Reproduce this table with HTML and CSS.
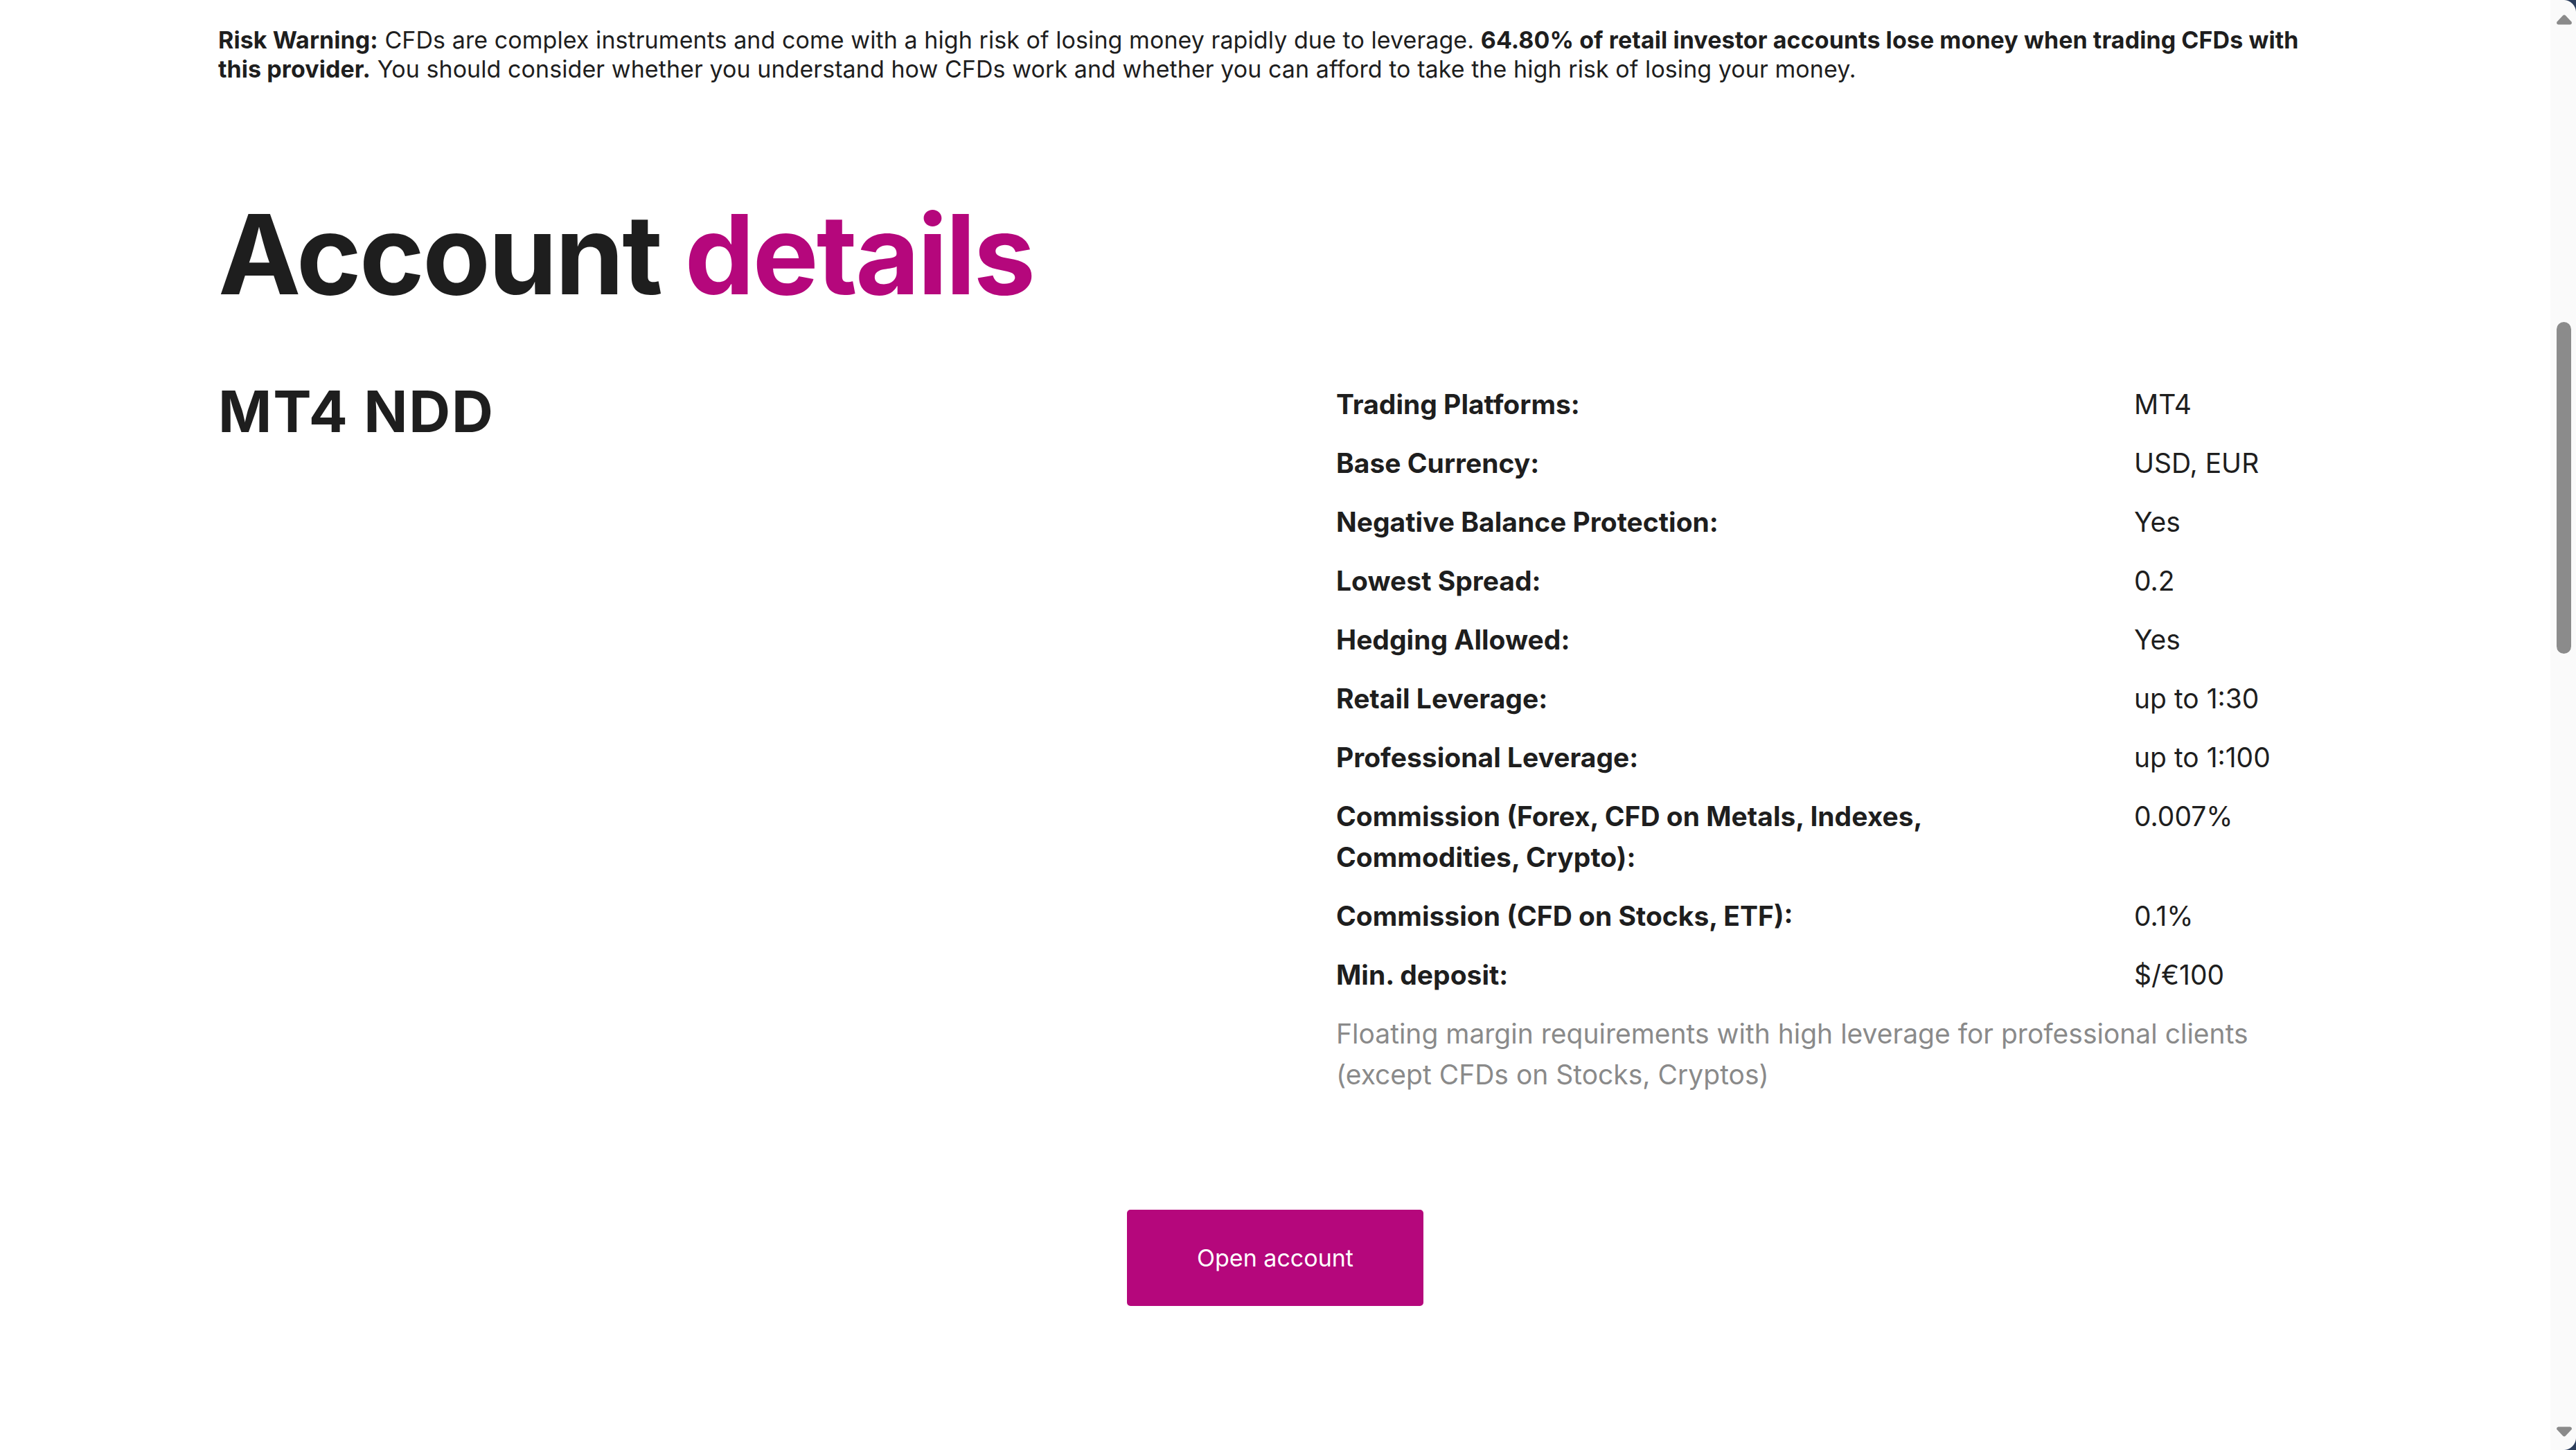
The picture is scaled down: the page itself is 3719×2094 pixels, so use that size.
FILE: index.html
```html
<!DOCTYPE html>
<html lang="en">
<head>
<meta charset="utf-8">
<title>Account details</title>
<link rel="stylesheet" href="styles.css">
</head>
<body>
<div class="screen">
  <main class="page">
    <div class="container">
      <p class="risk"><strong>Risk Warning:</strong> CFDs are complex instruments and come with a high risk of losing money rapidly due to leverage. <strong>64.80% of retail investor accounts lose money when trading CFDs with this provider.</strong> You should consider whether you understand how CFDs work and whether you can afford to take the high risk of losing your money.</p>

      <h1 class="title">Account <span class="accent">details</span></h1>

      <section class="details">
        <h2 class="acct-name">MT4 NDD</h2>
        <div class="specs">
          <div class="label">Trading Platforms:</div><div class="value">MT4</div>
          <div class="label">Base Currency:</div><div class="value">USD, EUR</div>
          <div class="label">Negative Balance Protection:</div><div class="value">Yes</div>
          <div class="label">Lowest Spread:</div><div class="value">0.2</div>
          <div class="label">Hedging Allowed:</div><div class="value">Yes</div>
          <div class="label">Retail Leverage:</div><div class="value">up to 1:30</div>
          <div class="label">Professional Leverage:</div><div class="value">up to 1:100</div>
          <div class="label">Commission (Forex, CFD on Metals, Indexes, Commodities, Crypto):</div><div class="value">0.007%</div>
          <div class="label">Commission (CFD on Stocks, ETF):</div><div class="value">0.1%</div>
          <div class="label">Min. deposit:</div><div class="value">$/€100</div>
          <div class="note">Floating margin requirements with high leverage for professional clients (except CFDs on Stocks, Cryptos)</div>
        </div>
      </section>

      <div class="actions">
        <a class="btn" href="#">Open account</a>
      </div>
    </div>
  </main>

  <aside class="scrollbar">
    <svg class="arrow" width="24" height="17" viewBox="0 0 24 17"><path d="M10 2.5 Q12 0.5 14 2.5 L22.5 11.5 Q24 14.5 20.5 15.5 L3.5 15.5 Q0 14.5 1.5 11.5 Z" fill="#8a8a8a"/></svg>
    <div class="track"><div class="thumb"></div></div>
    <svg class="arrow" width="24" height="17" viewBox="0 0 24 17"><path d="M10 14.5 Q12 16.5 14 14.5 L22.5 5.5 Q24 2.5 20.5 1.5 L3.5 1.5 Q0 2.5 1.5 5.5 Z" fill="#8a8a8a"/></svg>
  </aside>

  <div class="corner corner-tr"></div>
  <div class="corner corner-br"></div>
</div>
</body>
</html>
```

FILE: styles.css
```css
html, body {
  margin: 0;
  padding: 0;
  height: 100%;
  overflow: hidden;
  background: #ffffff;
}

body {
  font-family: "Inter", "Liberation Sans", sans-serif;
  color: #1e1e1e;
}

.screen {
  position: relative;
  display: flex;
  height: 2094px;
}

.page {
  flex: 1;
  min-width: 0;
}

.container {
  width: 3052px;
  margin: 0 auto;
  padding-top: 37px;
}

.risk {
  margin: 0;
  font-size: 34px;
  line-height: 42px;
  letter-spacing: 0.002em;
}

.risk strong {
  font-weight: 700;
}

.title {
  margin: 166px 0 0;
  font-size: 160px;
  line-height: 160px;
  font-weight: 700;
  letter-spacing: -0.019em;
  color: #1e1e1e;
}

.accent {
  color: #b5077c;
}

.details {
  margin-top: 94px;
  display: grid;
  grid-template-columns: 1614px 1fr;
  align-items: start;
}

.acct-name {
  margin: 3px 0 0;
  font-size: 83px;
  line-height: 100px;
  font-weight: 700;
  letter-spacing: 0.022em;
}

.specs {
  display: grid;
  grid-template-columns: 1000px 1fr;
  column-gap: 152px;
  font-size: 39px;
  line-height: 59px;
}

.label,
.value,
.note {
  padding: 13px 0;
}

.label {
  font-weight: 700;
  letter-spacing: 0;
}

.value {
  font-weight: 400;
}

.note {
  grid-column: 1 / -1;
  color: #8a8a8a;
}

.actions {
  margin-top: 153px;
  display: flex;
  justify-content: center;
}

.btn {
  display: block;
  width: 428px;
  height: 139px;
  line-height: 139px;
  text-align: center;
  background: #b5077c;
  color: #ffffff;
  font-size: 34px;
  text-decoration: none;
  border-radius: 5px;
}

.scrollbar {
  width: 37px;
  background: #fafafa;
  display: flex;
  flex-direction: column;
  align-items: center;
  padding: 20px 0 18px;
  box-sizing: border-box;
}

.arrow {
  display: block;
  margin-left: 2px;
}

.track {
  flex: 1;
  width: 100%;
  position: relative;
}

.thumb {
  position: absolute;
  top: 428px;
  left: 9px;
  width: 21px;
  height: 479px;
  border-radius: 11px;
  background: #8b8b8b;
}

.corner {
  position: absolute;
  right: 0;
  width: 18px;
  height: 18px;
}

.corner-tr {
  top: 0;
  background: radial-gradient(circle at 0 100%, transparent 17.5px, #2c3e5c 18.5px);
}

.corner-br {
  bottom: 0;
  background: radial-gradient(circle at 0 0, transparent 17.5px, #2c3e5c 18.5px);
}
```
